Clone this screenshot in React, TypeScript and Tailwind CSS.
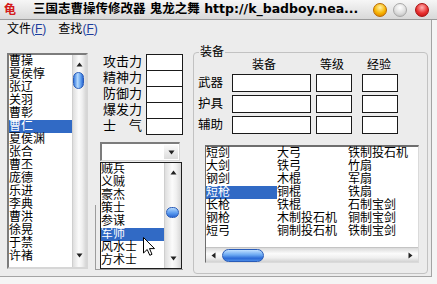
import React from "react";

const heroes = [
  "曹操", "夏侯惇", "张辽", "关羽", "曹彰", "曹仁", "夏侯渊", "张合",
  "曹丕", "庞德", "乐进", "李典", "曹洪", "徐晃", "于禁", "许褚",
];

const classes = ["贼兵", "义贼", "豪杰", "策士", "参谋", "军师", "风水士", "方术士"];

const items = [
  "短剑", "大剑", "钢剑", "短枪", "长枪", "钢枪", "短弓",
  "大弓", "铁弓", "木棍", "铜棍", "铁棍", "木制投石机", "铜制投石机",
  "铁制投石机", "竹扇", "军扇", "铁扇", "石制宝剑", "铜制宝剑", "铁制宝剑",
];

const stats = ["攻击力", "精神力", "防御力", "爆发力", "士　气"];

const UpArrow = () => (
  <svg width="7" height="5" viewBox="0 0 7 5">
    <path d="M3.5 0.5 L6.5 4.5 H0.5 Z" fill="#222" />
  </svg>
);

const DownArrow = () => (
  <svg width="7" height="5" viewBox="0 0 7 5">
    <path d="M0.5 0.5 H6.5 L3.5 4.5 Z" fill="#222" />
  </svg>
);

// 菜单项，(F) 带下划线
const MenuItem = ({ label }: { label: string }) => (
  <span>
    {label}
    <span className="text-[#1c3c9c]">
      (<span className="underline">F</span>)
    </span>
  </span>
);

export default function App() {
  return (
    <div className="relative h-[284px] w-[437px] overflow-hidden bg-[#f5f5f5] text-black [font-family:'Liberation_Sans','Noto_Sans_CJK_SC',sans-serif]">
      {/* 标题栏 */}
      <div className="flex h-[20px] items-center border-b border-[#9a9a9a] bg-[linear-gradient(#f6f6f6,#d9d9d9)]">
        <span className="ml-[4px] w-[13px] text-[12px] font-bold leading-none text-[#d41a1a]">龟</span>
        <span className="ml-[16px] whitespace-nowrap text-[12.5px] font-bold leading-none [font-family:'DejaVu_Sans','Noto_Sans_CJK_SC',sans-serif]">
          三国志曹操传修改器 鬼龙之舞 http://k_badboy.nea...
        </span>
        <div className="ml-auto mr-[8px] flex items-center">
          <span className="h-[14px] w-[14px] rounded-full border border-[#b86a00] bg-[radial-gradient(circle_at_50%_30%,#fff2a8,#f7b400_55%,#d87000)]" />
          <span className="ml-[6px] h-[14px] w-[14px] rounded-full border border-[#a8a8a8] bg-[radial-gradient(circle_at_50%_30%,#ffffff,#dedede_55%,#b4b4b4)]" />
          <span className="ml-[8px] h-[14px] w-[14px] rounded-full border border-[#a81010] bg-[radial-gradient(circle_at_50%_30%,#ffb4b4,#e83030_55%,#b80c0c)]" />
        </div>
      </div>

      {/* 客户区 */}
      <div className="h-[257px] w-[432px] border-r border-b border-[#a4a4a4] bg-[#ececec]">
        {/* 菜单栏 */}
        <div className="flex h-[17px] items-center gap-[12px] pl-[7px] text-[12px] leading-none">
          <MenuItem label="文件" />
          <MenuItem label="查找" />
        </div>

        <div className="flex pl-[7px] pt-[10px]">
          {/* 武将列表 */}
          <div className="mt-[6px] flex h-[216px] w-[81px] border-2 border-t-[#7c7c7c] border-l-[#7c7c7c] border-r-[#d6d6d6] border-b-[#d6d6d6] bg-white">
            <div className="w-[63px] text-[12px] leading-[13px]">
              {heroes.map((h) => (
                <div
                  key={h}
                  className={h === "曹仁" ? "h-[13px] bg-[#316ac5] text-white" : "h-[13px]"}
                >
                  {h}
                </div>
              ))}
            </div>
            <div className="flex w-[14px] flex-col border-l border-[#cfcfcf] bg-[linear-gradient(to_right,#dedede,#fbfbfb_45%,#f0f0f0_70%,#d6d6d6)]">
              <div className="flex h-[13px] items-end justify-center pb-[1px]">
                <UpArrow />
              </div>
              <div className="flex-1">
                <div className="ml-[0px] mt-[4px] h-[17px] w-[11px] rounded-full border border-[#2a5cb8] bg-[linear-gradient(to_right,#3a7de0,#b4d8fc_40%,#6aa8f2_70%,#2a66d2)]" />
              </div>
              <div className="flex h-[16px] items-start justify-center pt-[2px]">
                <DownArrow />
              </div>
            </div>
          </div>

          {/* 属性 */}
          <div className="relative ml-[12px] mt-[7px] flex w-[83px] flex-col">
            <div className="flex">
              <div className="flex w-[46px] flex-col pl-[3px] text-[13px] leading-[16px]">
                {stats.map((s) => (
                  <div key={s} className="h-[16px] whitespace-nowrap">
                    {s}
                  </div>
                ))}
              </div>
              <div className="flex w-[37px] flex-col">
                {stats.map((s, i) => (
                  <div
                    key={s}
                    className={
                      i === 0
                        ? "h-[17px] border border-[#1a1a1a] bg-white"
                        : "-mt-px h-[17px] border border-[#1a1a1a] bg-white"
                    }
                  />
                ))}
              </div>
            </div>

            {/* 下拉框 */}
            <div className="mt-[7px] flex h-[19px] w-[80px] border-t-2 border-l-2 border-r border-b border-t-[#7c7c7c] border-l-[#7c7c7c] border-r-[#d6d6d6] border-b-[#d6d6d6] bg-white">
              <div className="flex-1" />
              <div className="my-[1px] mr-[1px] flex w-[14px] items-center justify-center bg-[linear-gradient(#fafafa,#dcdcdc)]">
                <DownArrow />
              </div>
            </div>

            <div className="absolute left-[-5px] top-[151px] h-[65px] w-[88px] border-l border-b border-[#9c9c9c]" />

            {/* 弹出列表 */}
            <div className="relative z-10 mt-[1px] flex h-[107px] w-[82px] overflow-hidden border border-[#1e1e1e] bg-white">
              <div className="w-[63px] text-[12px] leading-[13px]">
                {classes.map((c) => (
                  <div
                    key={c}
                    className={c === "军师" ? "h-[13px] bg-[#316ac5] text-white" : "h-[13px]"}
                  >
                    {c}
                  </div>
                ))}
              </div>
              <div className="flex w-[17px] flex-col border-l border-[#cfcfcf] bg-[linear-gradient(to_right,#dedede,#fbfbfb_45%,#f0f0f0_70%,#d6d6d6)]">
                <div className="flex h-[14px] items-end justify-center pb-[2px]">
                  <UpArrow />
                </div>
                <div className="flex-1">
                  <div className="ml-[1px] mt-[30px] h-[11px] w-[13px] rounded-full border border-[#2a5cb8] bg-[linear-gradient(#b4d8fc,#5c9cf0_55%,#2a66d2)]" />
                </div>
                <div className="flex h-[14px] items-start justify-center pt-[2px]">
                  <DownArrow />
                </div>
              </div>
            </div>
          </div>

          {/* 装备 */}
          <fieldset className="ml-[10px] h-[227px] w-[235px] rounded-[4px] border border-[#c2c2c2] p-0">
            <legend className="ml-[5px] px-[1px] text-[12px] leading-[11px]">装备</legend>
            <div className="pl-[4px] pt-[1px]">
              <div className="flex h-[12px] text-[12px] leading-[12px]">
                <div className="w-[34px]" />
                <div className="w-[84px] pl-[20px]">装备</div>
                <div className="w-[46px] pl-[4px]">等级</div>
                <div className="pl-[5px]">经验</div>
              </div>
              <div className="mt-[3px] flex flex-col gap-[3px]">
                {["武器", "护具", "辅助"].map((r) => (
                  <div key={r} className="flex h-[18px] items-center">
                    <div className="w-[34px] text-[12.5px] leading-[18px]">{r}</div>
                    <div className="h-[18px] w-[79px] border border-[#1a1a1a] bg-white" />
                    <div className="ml-[5px] h-[18px] w-[36px] border border-[#1a1a1a] bg-white" />
                    <div className="ml-[10px] h-[18px] w-[36px] border border-[#1a1a1a] bg-white" />
                  </div>
                ))}
              </div>

              {/* 物品列表 */}
              <div className="ml-[7px] mt-[11px] flex h-[118px] w-[214px] flex-col border-t-2 border-l border-r border-b border-t-[#6e6e6e] border-l-[#6e6e6e] border-r-[#dadada] border-b-[#dadada] bg-white">
                <div className="grid grid-flow-col grid-cols-[71px_71px_71px] grid-rows-[repeat(7,13px)] text-[12px] leading-[13px]">
                  {items.map((it) => (
                    <div
                      key={it}
                      className={it === "短枪" ? "whitespace-nowrap bg-[#316ac5] text-white" : "whitespace-nowrap"}
                    >
                      {it}
                    </div>
                  ))}
                </div>
                <div className="mt-auto flex h-[15px] items-center border-t border-[#c4c4c4] bg-[linear-gradient(#dadada,#fbfbfb_40%,#efefef_70%,#d2d2d2)]">
                  <div className="flex w-[15px] justify-center">
                    <svg width="5" height="7" viewBox="0 0 5 7">
                      <path d="M4.5 0.5 V6.5 L0.5 3.5 Z" fill="#222" />
                    </svg>
                  </div>
                  <div className="ml-[1px] h-[13px] w-[42px] rounded-full border border-[#2a5cb8] bg-[linear-gradient(#c0e0ff,#6aa8f2_45%,#2c6ad6_75%,#4a8ae6)]" />
                  <div className="flex-1" />
                  <div className="flex w-[15px] justify-center">
                    <svg width="5" height="7" viewBox="0 0 5 7">
                      <path d="M0.5 0.5 V6.5 L4.5 3.5 Z" fill="#222" />
                    </svg>
                  </div>
                </div>
              </div>
            </div>
          </fieldset>
        </div>
      </div>

      {/* 鼠标指针 */}
      <svg className="absolute left-[143px] top-[237px] z-20" width="13" height="19" viewBox="0 0 13 19">
        <path
          d="M0.5 0.5 V16 L4.2 12.5 L6.8 18.3 L9 17.3 L6.5 11.6 L11.5 11.6 Z"
          fill="#fff"
          stroke="#000"
          strokeWidth="1"
          strokeLinejoin="miter"
        />
      </svg>
    </div>
  );
}
